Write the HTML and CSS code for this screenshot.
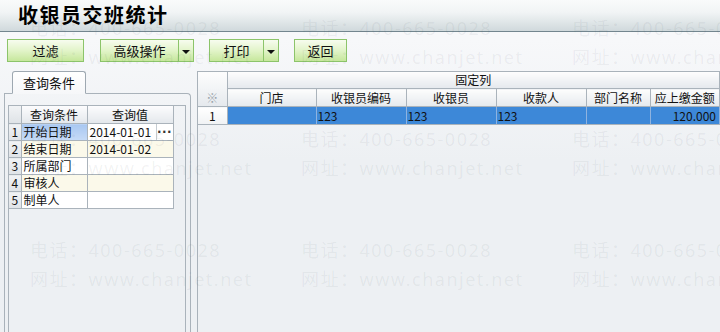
FILE: index.html
```html
<!DOCTYPE html>
<html lang="zh-CN">
<head>
    <meta charset="UTF-8">
    <title>收银员交班统计</title>

    <link rel="stylesheet" href="styles.css">
</head>
<body>
<div class="titlebar">
    <h1>收银员交班统计</h1>
</div>

<div class="toolbar">
    <button class="btn btn-filter">过滤</button>
    <div class="split">
        <button class="btn btn-adv">高级操作</button>
        <button class="btn btn-drop"><span class="caret"></span></button>
    </div>
    <div class="split">
        <button class="btn btn-print">打印</button>
        <button class="btn btn-drop"><span class="caret"></span></button>
    </div>
    <button class="btn btn-back">返回</button>
</div>

<div class="main">
    <div class="query">
        <div class="tab">查询条件</div>
        <div class="tab-panel">
            <div class="qgrid">
                <table class="qtable">
                    <colgroup>
                        <col style="width: 12px">
                        <col style="width: 66px">
                        <col style="width: 86px">
                    </colgroup>
                    <tr>
                        <th class="num"></th>
                        <th>查询条件</th>
                        <th>查询值</th>
                    </tr>
                    <tr>
                        <td class="num">1</td>
                        <td class="selected">开始日期</td>
                        <td>
                            <div class="value-cell">
                                <span>2014-01-01</span>
                                <span class="more">···</span>
                            </div>
                        </td>
                    </tr>
                    <tr class="alt">
                        <td class="num">2</td>
                        <td>结束日期</td>
                        <td>2014-01-02</td>
                    </tr>
                    <tr>
                        <td class="num">3</td>
                        <td>所属部门</td>
                        <td></td>
                    </tr>
                    <tr class="alt">
                        <td class="num">4</td>
                        <td>审核人</td>
                        <td></td>
                    </tr>
                    <tr>
                        <td class="num">5</td>
                        <td>制单人</td>
                        <td></td>
                    </tr>
                </table>
            </div>
        </div>
    </div>

    <div class="result">
        <table class="rtable">
            <colgroup>
                <col style="width: 29px">
                <col style="width: 89px">
                <col style="width: 90px">
                <col style="width: 90px">
                <col style="width: 90px">
                <col style="width: 64px">
                <col>
            </colgroup>
            <tr class="group-row">
                <th class="corner"></th>
                <th colspan="6">固定列</th>
            </tr>
            <tr class="head-row">
                <th class="corner mark">※</th>
                <th>门店</th>
                <th>收银员编码</th>
                <th>收银员</th>
                <th>收款人</th>
                <th>部门名称</th>
                <th>应上缴金额</th>
            </tr>
            <tr class="data-row">
                <td class="rownum">1</td>
                <td></td>
                <td>123</td>
                <td>123</td>
                <td>123</td>
                <td></td>
                <td class="amount">120.000</td>
            </tr>
        </table>
    </div>
</div>

<div class="watermark">
    <div class="mark-tile"><p>电话：400-665-0028</p><p>网址：www.chanjet.net</p></div>
    <div class="mark-tile"><p>电话：400-665-0028</p><p>网址：www.chanjet.net</p></div>
    <div class="mark-tile"><p>电话：400-665-0028</p><p>网址：www.chanjet.net</p></div>
    <div class="mark-tile"><p>电话：400-665-0028</p><p>网址：www.chanjet.net</p></div>
    <div class="mark-tile"><p>电话：400-665-0028</p><p>网址：www.chanjet.net</p></div>
    <div class="mark-tile"><p>电话：400-665-0028</p><p>网址：www.chanjet.net</p></div>
    <div class="mark-tile"><p>电话：400-665-0028</p><p>网址：www.chanjet.net</p></div>
    <div class="mark-tile"><p>电话：400-665-0028</p><p>网址：www.chanjet.net</p></div>
    <div class="mark-tile"><p>电话：400-665-0028</p><p>网址：www.chanjet.net</p></div>
</div>

</body>
</html>
```

FILE: styles.css
```css
html, body {
    margin: 0;
    height: 100%;
}

body {
    position: relative;
    display: flex;
    flex-direction: column;
    overflow: hidden;
    font-family: "Noto Sans CJK SC", sans-serif;
    font-size: 12px;
    color: #111;
    background: linear-gradient(#f7f8fa 40px, #edf0f3 160px);
}

/* title */
.titlebar {
    height: 31px;
    border-bottom: 1px solid #73868f;
    background: linear-gradient(#f9fbfb, #f1f4f5 40%, #d0d9dc);
}

.titlebar h1 {
    margin: 0;
    padding-left: 18px;
    font-size: 20px;
    line-height: 29px;
    letter-spacing: 1.5px;
    font-weight: bold;
    color: #000;
}

/* toolbar */
.toolbar {
    display: flex;
    gap: 15px;
    padding: 7px 0 9px 7px;
}

.btn {
    height: 23px;
    padding: 0;
    border: 1px solid #8cc46a;
    background: linear-gradient(#f7fcef, #e2f4c9 50%, #c6e79c);
    font-family: "Noto Sans CJK SC", sans-serif;
    font-size: 13px;
    line-height: 21px;
    color: #111;
    cursor: pointer;
}

.btn-filter { width: 77px; margin-right: 1px; }
.btn-adv { width: 79px; }
.btn-print { width: 55px; }
.btn-back { width: 53px; }

.split {
    display: flex;
}

.split .btn + .btn {
    border-left: none;
}

.btn-drop {
    width: 15px;
    display: flex;
    align-items: center;
    justify-content: center;
}

.caret {
    width: 0;
    height: 0;
    border-left: 4px solid transparent;
    border-right: 4px solid transparent;
    border-top: 4px solid #111;
    margin-top: 2px;
}

/* main area */
.main {
    flex: 1;
    display: flex;
    gap: 6px;
    min-height: 0;
}

.query {
    width: 187px;
    margin-left: 4px;
    display: flex;
    flex-direction: column;
}

.tab {
    position: relative;
    z-index: 1;
    width: 72px;
    height: 21px;
    margin-left: 8px;
    margin-bottom: -1px;
    border: 1px solid #9ea8b1;
    border-bottom: 1px solid #f6f7f9;
    border-radius: 3px 3px 0 0;
    background: linear-gradient(#ffffff, #f6f7f9);
    font-size: 13px;
    line-height: 21px;
    text-align: center;
}

.tab-panel {
    flex: 1;
    border: 1px solid #a9b2ba;
    border-bottom: none;
    border-radius: 0 4px 0 0;
    padding: 11px 4px 0 3px;
    display: flex;
}

.qgrid {
    flex: 1;
    border: 1px solid #aab3bb;
    border-bottom: none;
}

table {
    border-collapse: collapse;
    table-layout: fixed;
}

.qtable th,
.qtable td {
    border-right: 1px solid #aab3bb;
    border-bottom: 1px solid #aab3bb;
    padding: 0 0 0 2px;
    height: 16px;
    line-height: 16px;
    font-weight: normal;
    white-space: nowrap;
    overflow: hidden;
    background: #fff;
}

.qtable th {
    height: 17px;
    text-align: center;
    padding: 0;
    background: linear-gradient(#fcfcfd, #e4e8ec);
}

.qtable .num {
    padding: 0;
    text-align: center;
    background: linear-gradient(#f1f3f5, #dfe3e7);
}

.qtable .alt td {
    background: #fbf9ea;
}

.qtable .alt td.num {
    background: linear-gradient(#f1f3f5, #dfe3e7);
}

.qtable td.selected {
    background: linear-gradient(#a8c7f1, #c6dbf7);
}

.value-cell {
    display: flex;
    justify-content: space-between;
}

.more {
    width: 16px;
    border-left: 1px solid #c5ccd2;
    text-align: center;
    font-family: "DejaVu Sans", sans-serif;
    font-weight: bold;
    letter-spacing: 0.5px;
    color: #333;
}

/* result grid */
.result {
    flex: 1;
    border-left: 1px solid #a9b2ba;
    border-top: 1px solid #a9b2ba;
}

.rtable {
    width: 100%;
}

.rtable th,
.rtable td {
    border-right: 1px solid #aab3bb;
    border-bottom: 1px solid #aab3bb;
    padding: 0 1px;
    font-weight: normal;
    white-space: nowrap;
    overflow: hidden;
}

.rtable th {
    background: linear-gradient(#fdfdfd, #e5e9ed);
    text-align: center;
}

.group-row th {
    height: 16px;
    line-height: 16px;
}

.head-row th {
    height: 17px;
    line-height: 17px;
}

.rtable .group-row .corner {
    border-bottom: none;
    background: linear-gradient(#fdfdfd, #f2f4f6);
}

.rtable .head-row .corner {
    background: linear-gradient(#f2f4f6, #e5e9ed);
}

.mark {
    color: #9aa3ab;
}

.data-row td {
    height: 17px;
    line-height: 17px;
    background: #3d88d8;
    border-right-color: #8fb3df;
    border-bottom-color: #aab3bb;
    color: #111;
}

.data-row td.rownum {
    text-align: center;
    background: linear-gradient(#ffffff, #f0f2f4);
    border-right-color: #aab3bb;
}

.data-row td.amount {
    text-align: right;
    padding-right: 3px;
}

/* watermark */
.watermark {
    position: absolute;
    inset: 0;
    overflow: hidden;
    pointer-events: none;
    display: grid;
    grid-template-columns: repeat(3, 271px);
    grid-auto-rows: 111px;
    padding: 14px 0 0 30px;
    font-family: "Noto Sans", "Noto Sans CJK SC", sans-serif;
    font-size: 18px;
    color: rgba(70, 80, 90, 0.07);
}

.mark-tile p {
    margin: 0;
    line-height: 29px;
    letter-spacing: 1.5px;
    white-space: nowrap;
}
```
